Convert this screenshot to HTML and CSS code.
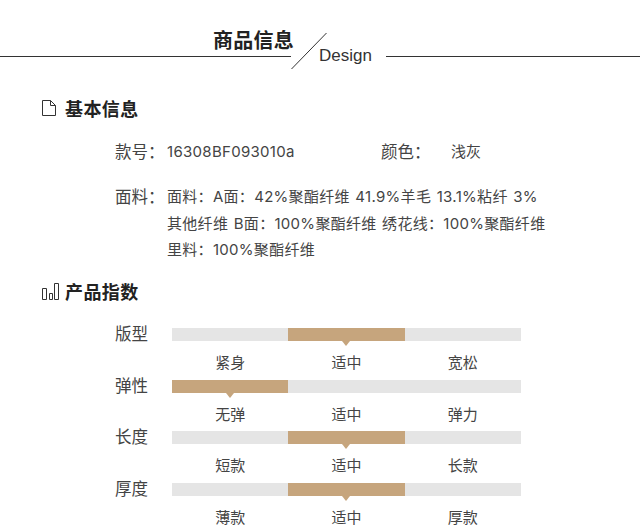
FILE: index.html
```html
<!DOCTYPE html>
<html lang="zh">
<head>
<meta charset="utf-8">
<title>商品信息</title>
<link rel="stylesheet" href="styles.css">
</head>
<body>
<header class="banner">
  <div class="banner-left"><h1 class="banner-title">商品信息</h1></div>
  <svg class="banner-slash" width="36" height="38" viewBox="0 0 36 38"><line x1="0.5" y1="37" x2="35.5" y2="1" stroke="#333" stroke-width="1"/></svg>
  <span class="banner-en">Design</span>
  <div class="banner-right"></div>
</header>

<section class="basic">
  <h2 class="heading">
    <svg class="icon" width="16" height="18" viewBox="0 0 16 18"><path d="M1.5 1.5H9.5L14.5 6.5V16.5H1.5Z M9.5 1.5V6.5H14.5" fill="none" stroke="#333" stroke-width="1"/></svg>
    基本信息
  </h2>
  <div class="info-row first">
    <span class="label">款号：</span>
    <span class="sku">16308BF093010a</span>
    <span class="label color-label">颜色：</span>
    <span class="color-value">浅灰</span>
  </div>
  <div class="info-row second">
    <span class="label">面料：</span>
    <div class="fabric">
      <div>面料：A面：42%聚酯纤维 41.9%羊毛 13.1%粘纤 3%</div>
      <div>其他纤维 B面：100%聚酯纤维 绣花线：100%聚酯纤维</div>
      <div>里料：100%聚酯纤维</div>
    </div>
  </div>
</section>

<section class="index">
  <h2 class="heading">
    <svg class="icon icon-bars" width="18" height="17" viewBox="0 0 18 17"><path d="M1.5 5.5H5.5V16.5H1.5Z M8.5 10.5H11.5V16.5H8.5Z M13.5 0.5H17.5V16.5H13.5Z" fill="none" stroke="#333" stroke-width="1"/></svg>
    产品指数
  </h2>
  <div class="scale-list">
    <div class="scale">
      <span class="scale-name">版型</span>
      <div class="scale-body">
        <div class="track"><i></i><i class="on"></i><i></i></div>
        <div class="ticks"><span>紧身</span><span>适中</span><span>宽松</span></div>
      </div>
    </div>
    <div class="scale">
      <span class="scale-name">弹性</span>
      <div class="scale-body">
        <div class="track"><i class="on"></i><i></i><i></i></div>
        <div class="ticks"><span>无弹</span><span>适中</span><span>弹力</span></div>
      </div>
    </div>
    <div class="scale">
      <span class="scale-name">长度</span>
      <div class="scale-body">
        <div class="track"><i></i><i class="on"></i><i></i></div>
        <div class="ticks"><span>短款</span><span>适中</span><span>长款</span></div>
      </div>
    </div>
    <div class="scale">
      <span class="scale-name">厚度</span>
      <div class="scale-body">
        <div class="track"><i></i><i class="on"></i><i></i></div>
        <div class="ticks"><span>薄款</span><span>适中</span><span>厚款</span></div>
      </div>
    </div>
  </div>
</section>
</body>
</html>
```
FILE: styles.css
```css
* { box-sizing: border-box; }
html, body { margin: 0; padding: 0; }
body {
  width: 640px;
  height: 529px;
  overflow: hidden;
  background: #fff;
  color: #444;
  font-family: "Inter", "Noto Sans CJK SC", sans-serif;
  font-size: 15px;
}
.banner {
  display: flex;
  align-items: flex-start;
  height: 70px;
  padding-top: 32px;
}
.banner-left {
  width: 291px;
  height: 25px;
  border-bottom: 1px solid #333;
  padding-left: 213px;
}
.banner-title {
  margin: 0;
  font-size: 20px;
  line-height: 18px;
  letter-spacing: 0.25px;
  font-weight: 700;
  color: #222;
  white-space: nowrap;
}
.banner-slash { flex: none; display: block; }
.banner-en {
  margin: 14px 0 0 -8px;
  width: 67px;
  font-family: "Liberation Sans", sans-serif;
  font-size: 17px;
  line-height: 20px;
  color: #333;
}
.banner-right {
  flex: 1;
  height: 25px;
  border-bottom: 1px solid #333;
}
.heading {
  display: flex;
  align-items: center;
  margin: 0;
  padding-left: 41px;
  height: 26px;
  gap: 8px;
  font-size: 18px;
  letter-spacing: 0.4px;
  font-weight: 700;
  color: #222;
}
.icon { flex: none; display: block; }
.icon-bars { margin-right: -2px; }
.basic { padding-top: 25px; }
.info-row { display: flex; padding-left: 115px; }
.first { margin-top: 19px; line-height: 24px; }
.second { margin-top: 20px; }
.label { width: 52px; flex: none; font-size: 16.5px; line-height: 26.5px; }
.first .label { line-height: 24px; }
.sku { width: 214px; flex: none; letter-spacing: 0.3px; }
.color-label { width: 70px; }
.fabric { line-height: 26.5px; letter-spacing: 0.3px; word-spacing: 1px; }
.index { padding-top: 14.5px; }
.scale-list { margin-top: 24px; }
.scale {
  display: flex;
  height: 51.5px;
  padding-left: 115px;
}
.scale-name { width: 57px; flex: none; font-size: 16.5px; line-height: 12px; }
.scale-body { width: 349px; flex: none; }
.track { display: flex; height: 13px; }
.track i {
  flex: 1;
  display: block;
  position: relative;
  background: #e5e5e5;
}
.track i.on { background: #c6a57d; }
.track i.on::after {
  content: "";
  position: absolute;
  top: 100%;
  left: 50%;
  margin-left: -4px;
  border: 4px solid transparent;
  border-top: 5px solid #c6a57d;
  border-bottom: 0;
}
.ticks { display: flex; margin-top: 12px; line-height: 20px; }
.ticks span { flex: 1; text-align: center; }
```
